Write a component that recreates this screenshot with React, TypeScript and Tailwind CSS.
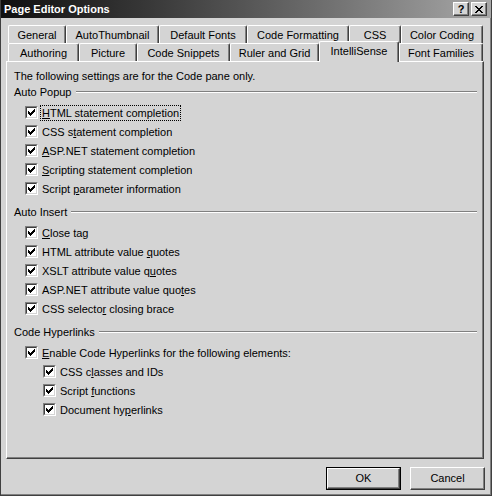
import React from "react";

type Opt = { pre: string; k: string; post: string; focus?: boolean };

const autoPopup: Opt[] = [
  { pre: "", k: "H", post: "TML statement completion", focus: true },
  { pre: "CSS s", k: "t", post: "atement completion" },
  { pre: "", k: "A", post: "SP.NET statement completion" },
  { pre: "", k: "S", post: "cripting statement completion" },
  { pre: "Script ", k: "p", post: "arameter information" },
];

const autoInsert: Opt[] = [
  { pre: "", k: "C", post: "lose tag" },
  { pre: "HTML attribute value ", k: "q", post: "uotes" },
  { pre: "XSLT attribute value q", k: "u", post: "otes" },
  { pre: "ASP.NET attribute value quo", k: "t", post: "es" },
  { pre: "CSS selecto", k: "r", post: " closing brace" },
];

const hyperSub: Opt[] = [
  { pre: "CSS c", k: "l", post: "asses and IDs" },
  { pre: "Script ", k: "f", post: "unctions" },
  { pre: "Document hy", k: "p", post: "erlinks" },
];

const row1 = [
  { label: "General", w: "w-[58px]" },
  { label: "AutoThumbnail", w: "w-[93px]" },
  { label: "Default Fonts", w: "w-[88px]" },
  { label: "Code Formatting", w: "w-[102px]" },
  { label: "CSS", w: "w-[52px]" },
  { label: "Color Coding", w: "w-[82px]" },
];

const row2 = [
  { label: "Authoring", w: "w-[71px]" },
  { label: "Picture", w: "w-[58px]" },
  { label: "Code Snippets", w: "w-[93px]" },
  { label: "Ruler and Grid", w: "w-[89px]" },
  { label: "IntelliSense", w: "w-[80px]", selected: true },
  { label: "Font Families", w: "w-[84px]" },
];

function Checkbox() {
  return (
    <span className="block w-[13px] h-[13px] shrink-0 border border-t-[#808080] border-l-[#808080] border-b-white border-r-white">
      <span className="block w-[11px] h-[11px] border border-t-[#404040] border-l-[#404040] border-b-[#d4d4d4] border-r-[#d4d4d4] bg-white">
        <svg width="9" height="9" viewBox="0 0 9 9" shapeRendering="crispEdges" className="block">
          <path
            fill="#000"
            d="M7 1h1v1h-1z M6 2h2v1h-2z M1 3h1v1h-1z M5 3h3v1h-3z M1 4h2v1h-2z M4 4h3v1h-3z M1 5h5v1h-5z M2 6h3v1h-3z M3 7h1v1h-1z"
          />
        </svg>
      </span>
    </span>
  );
}

function Option({ o, sub }: { o: Opt; sub?: boolean }) {
  return (
    <div className={`flex items-center h-[19px] ${sub ? "pl-[36px]" : "pl-[18px]"}`}>
      <Checkbox />
      <span
        className={`ml-[2px] px-[1px] leading-[14px] border ${
          o.focus ? "border-dotted border-black" : "border-transparent"
        }`}
      >
        {o.pre}
        <span className="underline underline-offset-[1px]">{o.k}</span>
        {o.post}
      </span>
    </div>
  );
}

function GroupHeader({ title }: { title: string }) {
  return (
    <div className="flex items-center h-[16px] pl-[7px] pr-[6px]">
      <span className="leading-[14px]">{title}</span>
      <span className="flex-1 ml-[4px] h-[2px] border-t border-t-[#808080] border-b border-b-white" />
    </div>
  );
}

function Tab({ label, w, selected }: { label: string; w: string; selected?: boolean }) {
  return (
    <div
      className={`${w} ${
        selected ? "relative z-10 -mt-[2px] h-[21px]" : "h-[18px]"
      } shrink-0 bg-[#d4d4d4] border-t border-l border-t-white border-l-white border-r border-r-[#404040] shadow-[inset_-1px_0_0_#808080] rounded-tl-[2px] rounded-tr-[2px] pt-[2px] text-center leading-[14px]`}
    >
      {label}
    </div>
  );
}

export default function App() {
  return (
    <div className="w-[492px] h-[496px] flex flex-col bg-[#d4d4d4] border-l border-r border-b border-l-[#404040] border-r-[#404040] border-b-[#404040] shadow-[inset_-1px_-1px_0_#808080] font-['Liberation_Sans',Arial,sans-serif] text-[11px] text-black overflow-hidden">
      {/* title bar */}
      <div className="h-[18px] shrink-0 flex items-start pl-[3px] pr-[4px] bg-gradient-to-r from-[#101010] to-[#a8a8a8]">
        <span className="mt-[2px] font-bold text-white leading-[14px]">Page Editor Options</span>
        <div className="ml-auto mt-[2px] flex gap-[2px]">
          <div className="w-[16px] h-[14px] bg-[#d4d4d4] border border-t-white border-l-white border-r-[#404040] border-b-[#404040] shadow-[inset_-1px_-1px_0_#808080] flex items-center justify-center font-bold text-[11px] leading-none">
            ?
          </div>
          <div className="w-[16px] h-[14px] bg-[#d4d4d4] border border-t-white border-l-white border-r-[#404040] border-b-[#404040] shadow-[inset_-1px_-1px_0_#808080] flex items-center justify-center">
            <svg width="8" height="7" viewBox="0 0 8 7" shapeRendering="crispEdges">
              <path
                fill="#000"
                d="M0 0h2v1h-2z M6 0h2v1h-2z M1 1h2v1h-2z M5 1h2v1h-2z M2 2h4v1h-4z M3 3h2v1h-2z M2 4h4v1h-4z M1 5h2v1h-2z M5 5h2v1h-2z M0 6h2v1h-2z M6 6h2v1h-2z"
              />
            </svg>
          </div>
        </div>
      </div>

      {/* tab rows */}
      <div className="ml-[7px] mt-[7px] flex h-[18px] shrink-0">
        {row1.map((t) => (
          <Tab key={t.label} label={t.label} w={t.w} />
        ))}
      </div>
      <div className="ml-[7px] flex h-[18px] shrink-0">
        {row2.map((t) => (
          <Tab key={t.label} label={t.label} w={t.w} selected={t.selected} />
        ))}
      </div>

      {/* panel */}
      <div className="ml-[5px] w-[478px] h-[398px] shrink-0 border-t border-l border-t-white border-l-white border-r border-b border-r-[#404040] border-b-[#404040] shadow-[inset_-1px_-1px_0_#808080] pt-[6px]">
        <div className="h-[16px] pl-[7px] leading-[16px]">The following settings are for the Code pane only.</div>
        <GroupHeader title="Auto Popup" />
        <div className="mt-[3px]">
          {autoPopup.map((o) => (
            <Option key={o.pre + o.k + o.post} o={o} />
          ))}
        </div>
        <div className="mt-[6px]">
          <GroupHeader title="Auto Insert" />
        </div>
        <div className="mt-[3px]">
          {autoInsert.map((o) => (
            <Option key={o.pre + o.k + o.post} o={o} />
          ))}
        </div>
        <div className="mt-[6px]">
          <GroupHeader title="Code Hyperlinks" />
        </div>
        <div className="mt-[3px]">
          <Option o={{ pre: "", k: "E", post: "nable Code Hyperlinks for the following elements:" }} />
          {hyperSub.map((o) => (
            <Option key={o.pre + o.k + o.post} o={o} sub />
          ))}
        </div>
      </div>

      {/* buttons */}
      <div className="mt-[8px] flex justify-end gap-[9px] pr-[6px]">
        <button className="w-[75px] h-[23px] border border-black bg-[#d4d4d4]">
          <span className="flex w-full h-full items-center justify-center border border-t-white border-l-white border-r-[#404040] border-b-[#404040] shadow-[inset_-1px_-1px_0_#808080]">
            OK
          </span>
        </button>
        <button className="w-[75px] h-[23px] flex items-center justify-center bg-[#d4d4d4] border border-t-white border-l-white border-r-[#404040] border-b-[#404040] shadow-[inset_-1px_-1px_0_#808080]">
          Cancel
        </button>
      </div>
    </div>
  );
}
